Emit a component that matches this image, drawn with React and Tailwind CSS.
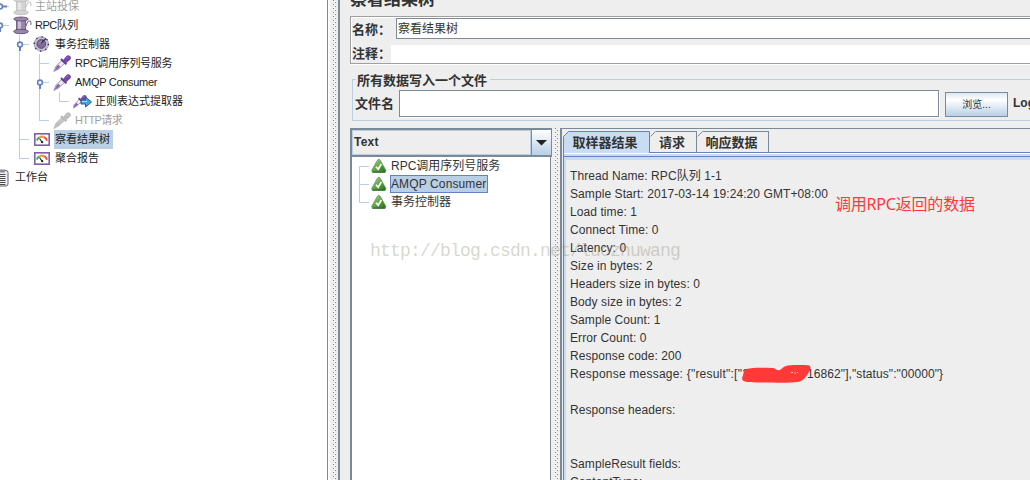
import React from 'react';

const treeRows = [
  { guides: ['tee-shut'], icon: 'spoolOff', label: '主站投保', off: true },
  { guides: ['tee-open'], icon: 'spool', label: 'RPC队列', tracking: 'tracking-[-0.5px]' },
  { guides: ['none', 'tee-open'], icon: 'gear', label: '事务控制器' },
  { guides: ['none', 'pass', 'tee'], icon: 'dropper', label: 'RPC调用序列号服务', tracking: 'tracking-[-0.3px]' },
  { guides: ['none', 'pass', 'tee-open'], icon: 'dropper', label: 'AMQP Consumer', tracking: 'tracking-[-0.3px]' },
  { guides: ['none', 'pass', 'pass', 'end'], icon: 'extractor', label: '正则表达式提取器' },
  { guides: ['none', 'pass', 'end'], icon: 'dropperOff', label: 'HTTP请求', off: true, tracking: 'tracking-[-0.6px]' },
  { guides: ['none', 'tee'], icon: 'gauge', label: '察看结果树', selected: true },
  { guides: ['none', 'end'], icon: 'gauge', label: '聚合报告' },
  { guides: [], icon: 'clipboard', label: '工作台' },
];

const results = [
  { label: 'RPC调用序列号服务' },
  { label: 'AMQP Consumer', selected: true },
  { label: '事务控制器' },
];

const Guide = ({ kind }) => {
  const open = kind === 'tee-open';
  const shut = kind === 'tee-shut';
  return (
    <svg className="h-[19px] w-5 shrink-0" viewBox="0 0 20 19">
      {kind !== 'none' && (
        <path
          d={kind === 'end' ? 'M9.5 0V9.5' : 'M9.5 0V19'}
          stroke="#b8cfe5"
          fill="none"
        />
      )}
      {kind !== 'none' && kind !== 'pass' && <path d="M9 9.5H19" stroke="#b8cfe5" />}
      {open && <path d="M10 10V16" stroke="#6382bf" strokeWidth="2" />}
      {shut && <path d="M10 9.5H17" stroke="#6382bf" strokeWidth="2" />}
      {(open || shut) && <circle cx="10" cy="9.5" r="2.4" fill="#fff" stroke="#6382bf" strokeWidth="1.6" />}
    </svg>
  );
};

const Spool = ({ off }) => {
  const dark = off ? '#bdbdbd' : '#5b4b66';
  const mid = off ? '#d4d4d4' : '#9a86ad';
  const light = off ? '#e6e6e6' : '#c9bcd6';
  return (
    <>
      <path d="M3 4h10v11H3z" fill={mid} />
      <path d="M5 4h3v11H5z" fill={light} />
      <path d="M3.5 4v11M12.5 4v11" stroke={dark} strokeWidth=".6" />
      <ellipse cx="8" cy="3" rx="7.3" ry="2" fill={mid} stroke={dark} strokeWidth=".8" />
      <ellipse cx="8" cy="15.5" rx="7.3" ry="2.2" fill={mid} stroke={dark} strokeWidth=".9" />
      <path d="M12 11C15 9 13 5 16 5s1.5 3 2 4" stroke={off ? '#c8c8c8' : '#77718a'} strokeWidth="1.1" fill="none" />
    </>
  );
};

const Dropper = ({ off }) => (
  <>
    <path d="M.8 17.5 3 12.2 9 6.4l2.7 2.8-6 5.7z" fill={off ? '#c6c6c6' : '#ece9f1'} stroke={off ? '#b9b9b9' : '#8b7d99'} strokeWidth=".8" />
    <path d="M1.6 16.8 3.6 12.4l1.8-1.6 2 1.9-2.6 2.2z" fill={off ? '#bdbdbd' : '#8a5fc0'} />
    <path d="m8 5 5.4 5.4" stroke={off ? '#b5b5b5' : '#5e3b92'} strokeWidth="2" />
    <path d="M9.8 6.5 13.4 2a2.7 2.7 0 0 1 4 3.6l-4.7 4z" fill={off ? '#bdbdbd' : '#7446ad'} />
    <path d="m13.4 4.3 1.4-1.4" stroke={off ? '#d2d2d2' : '#ad8cd5'} />
  </>
);

const icons = {
  spool: <Spool />,
  spoolOff: <Spool off />,
  dropper: <Dropper />,
  dropperOff: <Dropper off />,
  gear: (
    <>
      <circle cx="8.3" cy="9" r="7.2" fill="#c7bdd5" stroke="#a99bbd" />
      <circle cx="8.3" cy="9" r="7.1" fill="none" stroke="#302b38" strokeWidth="1.4" strokeDasharray="1.2 4.376" />
      <circle cx="8.3" cy="9" r="4.4" fill="#7d6b99" stroke="#4e435f" strokeWidth=".8" />
      <path d="m8 8 5-4.5" stroke="#33293f" strokeWidth="1.2" />
      <path d="M6 8.5c.6-1.5 2-2 3-1.8" stroke="#b7a7cf" fill="none" />
    </>
  ),
  gauge: (
    <>
      <rect x="1.8" y="3.8" width="14.4" height="11.4" fill="#fff" stroke="#7c5fae" strokeWidth="1.6" />
      <path d="M4 10.7Q4.3 8.5 6.2 7.2" stroke="#3fa64d" strokeWidth="1.9" fill="none" />
      <path d="M6.5 7.2Q9 6 11.2 7.2" stroke="#f09a3e" strokeWidth="2.2" fill="none" />
      <path d="M11.2 7.2Q13.4 8.4 14 10.7" stroke="#e9553f" strokeWidth="2.1" fill="none" />
      <path d="m6.5 8.5 2.7 3.9" stroke="#222" strokeWidth="1.1" />
      <circle cx="9.2" cy="12.2" r="1.1" fill="#222" />
    </>
  ),
  extractor: (
    <>
      <g transform="translate(-1 2) scale(.82)">
        <Dropper />
      </g>
      <path d="M8 8h4.5V5l6 5-6 5v-3H8z" fill="#4aa3dc" stroke="#17629f" strokeWidth="1" />
      <path d="M9 9.5h5" stroke="#a9dcf7" />
    </>
  ),
  clipboard: (
    <>
      <rect x="1" y="2.5" width="14" height="15.5" rx="2" fill="#f1eff4" stroke="#65606d" />
      <path d="M4 1.5h8v3H4z" fill="#8f8999" />
      <path d="M3.5 6.5h9M3.5 8.5h9M3.5 10.5h9M3.5 12.5h9M3.5 14.5h9M3.5 16.5h9" stroke="#4b4b4b" />
    </>
  ),
};

const TreeRow = ({ row }) => (
  <div className="flex h-[19px] shrink-0 items-center">
    {row.guides.map((kind, i) => (
      <Guide key={i} kind={kind} />
    ))}
    <svg className="ml-[3px] h-[19px] w-5 shrink-0" viewBox="0 0 20 19">
      {icons[row.icon]}
    </svg>
    <span
      className={`ml-px flex h-[19px] items-center whitespace-nowrap px-px text-[11px] leading-[19px] ${
        row.off ? 'text-[#a0a0a0]' : 'text-[#222]'
      } ${row.selected ? 'bg-[#b8cfe5] pr-[3px]' : ''} ${row.tracking || ''}`}
    >
      {row.label}
    </span>
  </div>
);

const Dots = () => (
  <svg className="h-full w-1 shrink-0" aria-hidden="true">
    <defs>
      <pattern id="grip" width="4" height="4" patternUnits="userSpaceOnUse">
        <path d="M0 0h1v1H0zM2 2h1v1H2z" fill="#7a8a99" />
        <path d="M0 3h1v1H0zM2 1h1v1H2z" fill="#fff" />
      </pattern>
    </defs>
    <rect width="4" height="480" fill="url(#grip)" />
  </svg>
);

const Passed = () => (
  <svg className="h-4 w-4 shrink-0" viewBox="0 0 16 16">
    <defs>
      <linearGradient id="pass" x1="0" y1="0" x2="1" y2="1">
        <stop offset="0" stopColor="#b9d9a8" />
        <stop offset=".5" stopColor="#5ea83f" />
        <stop offset="1" stopColor="#247016" />
      </linearGradient>
    </defs>
    <path
      d="M7.8 1.3c.8 0 1.2.6 1.6 1.3l5.3 9.4c.6 1.3 0 2-1.2 2H2.2C.9 14 .4 13.1.9 12L6.2 2.6c.4-.7.8-1.3 1.6-1.3z"
      fill="url(#pass)"
      stroke="#5d8a61"
      strokeWidth=".7"
    />
    <path d="M1.3 14.2h13" stroke="#1c5a14" />
    <path d="m5 8.7 2.2 2.6L10.3 6" stroke="#fff" strokeWidth="1.7" fill="none" />
  </svg>
);

const Tab = ({ label, width, active }) => (
  <div className={`relative flex h-[22px] shrink-0 items-center justify-center ${width}`}>
    <svg className="absolute inset-0 h-full w-full" preserveAspectRatio="none">
      {active ? (
        <path d="M.5 24V5.5L5.5.5H86.5V24" fill="#c8ddf2" stroke="#6382bf" />
      ) : (
        <path d="M.5 5.5 5.5.5H200" fill="none" stroke="#7a8a99" />
      )}
    </svg>
    {!active && <span className="absolute right-0 top-0 h-full w-px bg-[#7a8a99]" />}
    <span className="relative whitespace-nowrap pr-[3px] text-[13px] font-bold leading-none text-[#333]">{label}</span>
  </div>
);

const Sidebar = () => (
  <div className="flex h-full w-[327px] shrink-0 flex-col overflow-hidden bg-white">
    <div className="-ml-2.5 -mt-[3px] flex flex-col">
      {treeRows.map((row) => (
        <TreeRow key={row.label} row={row} />
      ))}
    </div>
  </div>
);

const Header = () => (
  <div className="flex h-[72px] shrink-0 flex-col">
    <div className="-mt-[9px] h-[25px] text-[17px] font-bold leading-[18px] text-[#333]">察看结果树</div>
    <div className="flex h-12 flex-col border border-r-0 border-[#a0a0a0] shadow-[inset_1px_1px_0_#fff,0_1px_0_#fff]">
      <div className="flex h-[26px] pt-px">
        <span className="w-[45px] pl-px text-[13px] font-bold leading-[23px]">名称：</span>
        <span className="h-[21px] flex-1 border border-r-0 border-[#7a8a99] bg-white pl-px text-[12px] leading-[20px]">
          察看结果树
        </span>
      </div>
      <div className="flex h-5">
        <span className="w-10 pl-px text-[13px] font-bold leading-[21px]">注释：</span>
        <span className="mt-[2px] h-[18px] flex-1 bg-white" />
      </div>
    </div>
  </div>
);

const FileBox = () => (
  <div className="ml-0.5 flex h-[50px] shrink-0 flex-col">
    <div className="flex h-[9px] shrink-0 items-end">
      <span className="h-[2px] w-1 border-l border-t border-[#b8cfe5]" />
      <span className="whitespace-nowrap px-px text-[13px] font-bold leading-[1px]">所有数据写入一个文件</span>
      <span className="ml-[2px] h-[2px] flex-1 border-t border-[#b8cfe5]" />
    </div>
    <div className="flex h-10 shrink-0 border-b border-l border-[#b8cfe5]">
      <span className="w-[46px] shrink-0 pl-[2px] pt-px text-[13px] font-bold leading-[43px]">文件名</span>
      <span className="mt-[9px] h-[27px] w-[540px] shrink-0 border border-[#7a8a99] bg-white shadow-[1px_1px_0_#fff]" />
      <span className="ml-1.5 mt-[11px] flex h-[25px] w-[63px] shrink-0 items-center justify-center border border-[#7a8a99] bg-linear-to-b from-[#dde8f3] via-white via-30% to-[#b8cfe5] text-[10px]">
        浏览...
      </span>
      <span className="ml-[5px] whitespace-nowrap pt-px text-[12px] font-bold leading-[43px]">Log</span>
    </div>
  </div>
);

const ResultTree = () => (
  <div className="flex w-[202px] shrink-0 flex-col">
    <div className="flex h-[29px] shrink-0 border-2 border-r border-[#7a8a99]">
      <span className="flex-1 border border-[#b8cfe5] pl-px text-[12px] font-bold leading-[23px] tracking-[0.2px]">Text</span>
      <span className="flex w-5 items-center justify-center border-l border-[#7a8a99] bg-linear-to-b from-white to-[#b8cfe5]">
        <svg className="h-[6px] w-[11px]" viewBox="0 0 11 6">
          <path d="M0 0h11L5.5 5.5z" fill="#222" />
        </svg>
      </span>
    </div>
    <div className="mr-px flex-1 border-l-2 border-r border-[#7a8a99] bg-white">
      {results.map((item, i) => (
        <div key={item.label} className="flex h-[18px] items-center pl-[7px]">
          <svg className="h-[18px] w-3 shrink-0" viewBox="0 0 12 18">
            <path
              d={i === 0 ? 'M.5 18V9.5H10' : i === 1 ? 'M.5 0V18M0 9.5H10' : 'M.5 0V9.5H10'}
              fill="none"
              stroke="#b8cfe5"
            />
          </svg>
          <Passed />
          <span
            className={`ml-[3px] h-[18px] whitespace-nowrap border text-[12px] leading-[17px] ${
              item.selected ? 'border-[#6382bf] bg-[#b8cfe5] pr-px tracking-[0.12px]' : 'border-transparent'
            }`}
          >
            {item.label}
          </span>
        </div>
      ))}
    </div>
  </div>
);

const Line = ({ children }) => <div className="h-[18px] whitespace-pre">{children}</div>;

const Detail = () => (
  <div className="flex min-w-0 flex-1 flex-col border-l-2 border-t border-[#7a8a99]">
    <div className="flex h-[23px] shrink-0 pl-px pt-[2px]">
      <Tab label="取样器结果" width="w-[87px]" active />
      <Tab label="请求" width="w-[47px]" />
      <Tab label="响应数据" width="w-[72px]" />
    </div>
    <div className="ml-px flex min-h-0 flex-1 flex-col border-l border-t border-[#6382bf]">
      <div className="h-[3px] shrink-0 border-t border-white bg-[#c8ddf2]" />
      <div className="min-h-0 flex-1 border-t border-[#6382bf]">
        <div className="h-full border-l-2 border-t-[3px] border-[#c8ddf2] pl-1 pt-[7px] text-[12px] leading-[18px] tracking-[0.08px]">
          <Line>Thread Name: RPC队列 1-1</Line>
          <Line>Sample Start: 2017-03-14 19:24:20 GMT+08:00</Line>
          <Line>Load time: 1</Line>
          <Line>Connect Time: 0</Line>
          <Line>Latency: 0</Line>
          <Line>Size in bytes: 2</Line>
          <Line>Headers size in bytes: 0</Line>
          <Line>Body size in bytes: 2</Line>
          <Line>Sample Count: 1</Line>
          <Line>Error Count: 0</Line>
          <Line>Response code: 200</Line>
          <Line>
            <span className="tracking-[0.22px]">{'Response message: {"result":["2'}</span>
            <span className="inline-block w-[58px]" />
            {'16862"],"status":"00000"}'}
          </Line>
          <Line />
          <Line>Response headers:</Line>
          <Line />
          <Line />
          <Line>SampleResult fields:</Line>
          <Line>ContentType:</Line>
        </div>
      </div>
    </div>
  </div>
);

export default function App() {
  return (
    <div className="relative flex h-[480px] w-[1030px] overflow-hidden bg-[#eee] font-['Liberation_Sans','Noto_Sans_CJK_SC',sans-serif] text-[#333]">
      <Sidebar />
      <div className="flex w-[13px] shrink-0 border-l border-r-2 border-[#7a8a99]">
        <span className="mr-[3px] w-[2px] bg-white" />
        <Dots />
      </div>
      <div className="ml-2.5 flex min-w-0 flex-1 flex-col">
        <Header />
        <FileBox />
        <div className="mt-1.5 flex min-h-0 flex-1">
          <ResultTree />
          <div className="flex w-2 shrink-0 pl-[3px]">
            <Dots />
          </div>
          <Detail />
        </div>
      </div>

      {/* annotations drawn over the window */}
      <span className="absolute left-[835px] top-[193px] whitespace-nowrap font-['Noto_Sans','Noto_Sans_CJK_SC',sans-serif] text-[16px] leading-[22px] tracking-[-0.2px] text-[#ff3838]">
        调用RPC返回的数据
      </span>
      <svg className="absolute left-[741px] top-[364px] h-5 w-[71px]" viewBox="0 0 71 20">
        <path
          d="M4 6C9 3 22 4 31 4c4 0 4 3 8 2 3-2 4-4 8-4.5 6-.6 13-.5 20-.3 3 .2 3 3 1.500 6C65 13 62 17 57 18c-8 1-17 .8-26 .5-10 0-19 .3-26-.7-4-.6-4.500-3-3.300-5.600C2.500 10 2.500 7 4 6z"
          fill="#ff3838"
        />
        <path d="M50 8.5h2M53.5 9h1.5M56 8.5h1" stroke="#ffc9c9" />
      </svg>
      <span className="absolute left-[370px] top-[240px] whitespace-nowrap font-['Liberation_Mono',monospace] text-[18px] leading-[22px] tracking-[-0.8px] text-[#8a8a70]/35">
        http://blog.csdn.net/luozhuwang
      </span>
    </div>
  );
}
